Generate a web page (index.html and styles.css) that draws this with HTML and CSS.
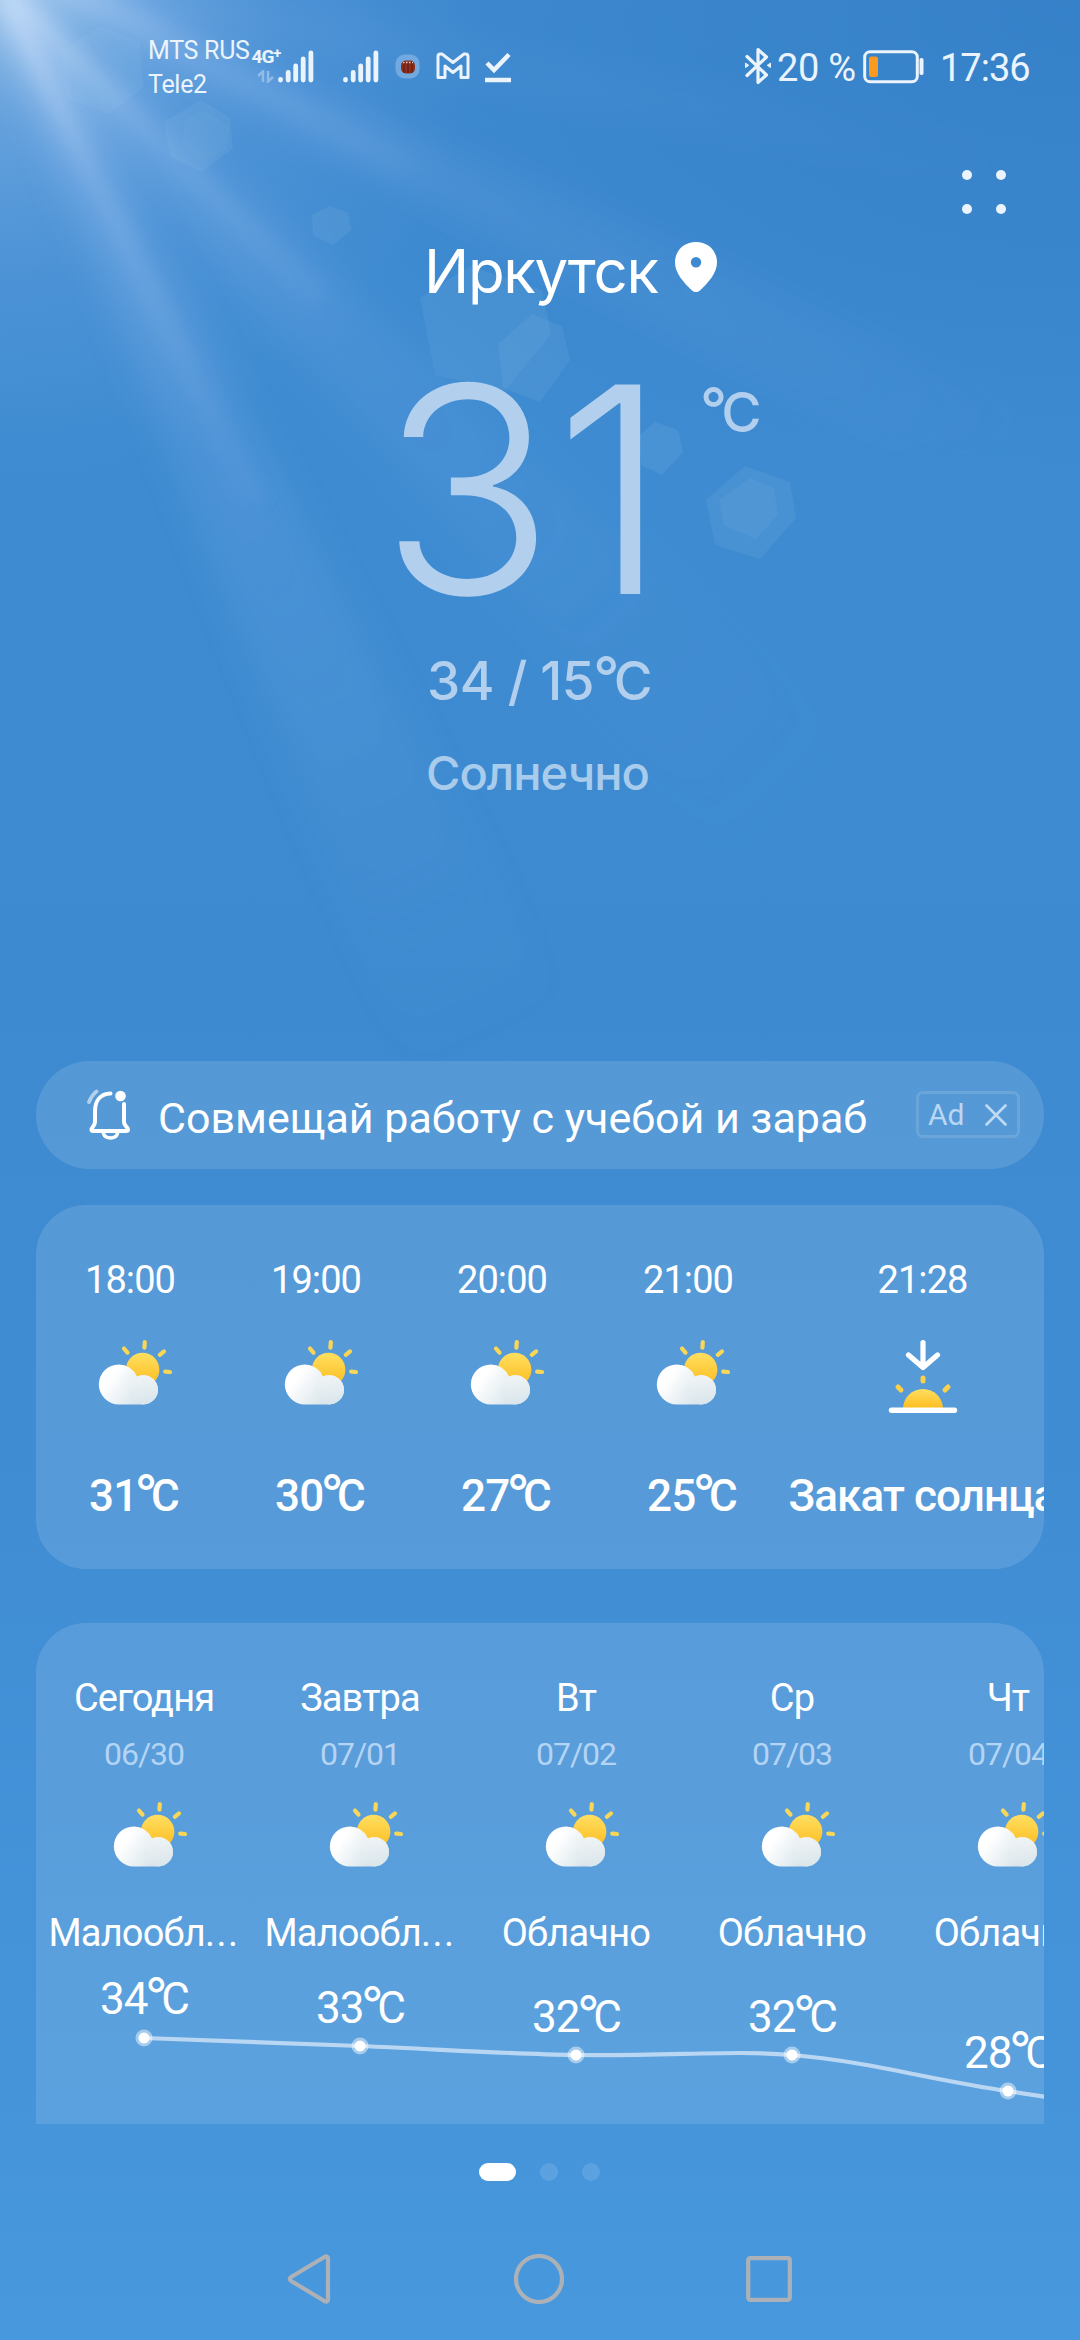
FILE: index.html
```html
<!DOCTYPE html>
<html lang="ru">
<head>
<meta charset="utf-8">
<title>Погода</title>
<link rel="stylesheet" href="styles.css">
</head>
<body>
<svg class="defs" width="0" height="0" aria-hidden="true">
  <defs>
    <linearGradient id="sun" x1="0" y1="0" x2="0" y2="1"><stop offset="0" stop-color="#ffdf60"/><stop offset="1" stop-color="#fdbb1e"/></linearGradient>
    <linearGradient id="cloudA" x1="0" y1="0" x2="1" y2="0.5"><stop offset="0.3" stop-color="#fff"/><stop offset="1" stop-color="#d3e1e8"/></linearGradient>
    <linearGradient id="cloudB" x1="0.3" y1="0" x2="0.5" y2="1"><stop offset="0" stop-color="#f1f4f6"/><stop offset="1" stop-color="#d9e6ec"/></linearGradient>
    <symbol id="partly" viewBox="0 0 84 80">
      <g stroke="#f8d658" stroke-width="4.2" stroke-linecap="round">
        <path d="M55.8 6.2L55.4 11.6M35 12.6L38.5 16.6M70.8 18.8L75 15.4M76.2 35.6L81 36"/>
      </g>
      <circle cx="53.6" cy="33.6" r="16.8" fill="url(#sun)"/>
      <path d="M29.8 28.4a20 20 0 0 0 0 40H54.4a14.6 14.6 0 0 0 0-29.2q-4 0-6.4 1.2A20 20 0 0 0 29.8 28.4z" fill="url(#cloudA)"/>
      <circle cx="54.4" cy="53.8" r="14.6" fill="url(#cloudB)"/>
    </symbol>
    <symbol id="sunset" viewBox="0 0 84 80">
      <g fill="none" stroke="#fff" stroke-width="5.2" stroke-linecap="round" stroke-linejoin="round"><path d="M42 6.5V30M27.5 19L42 31.5L56.5 19"/></g>
      <g stroke="#fbd04a" stroke-width="5" stroke-linecap="round"><path d="M42 42V45M17 51L20 54M67 51L64 54"/></g>
      <path d="M22 73a20 20 0 0 1 40 0z" fill="url(#sun)"/>
      <path d="M10.5 74.3H73.5" stroke="#fff" stroke-width="5.4" stroke-linecap="round"/>
    </symbol>
  </defs>
</svg>

<main class="screen">
  <svg class="sky" viewBox="0 0 1080 1200" aria-hidden="true">
    <defs>
      <radialGradient id="glow" gradientUnits="userSpaceOnUse" cx="0" cy="0" r="480"><stop offset="0" stop-color="#fff" stop-opacity="0.42"/><stop offset="0.25" stop-color="#cfe0ff" stop-opacity="0.26"/><stop offset="0.6" stop-color="#a8c8f8" stop-opacity="0.11"/><stop offset="1" stop-color="#a8c8f8" stop-opacity="0"/></radialGradient>
      <radialGradient id="ray" gradientUnits="userSpaceOnUse" cx="0" cy="0" r="1150"><stop offset="0" stop-color="#dcebff" stop-opacity="0.75"/><stop offset="0.18" stop-color="#a9c8f4" stop-opacity="0.3"/><stop offset="0.45" stop-color="#8fb8ee" stop-opacity="0.16"/><stop offset="1" stop-color="#8fb8ee" stop-opacity="0"/></radialGradient>
      <filter id="soft" filterUnits="userSpaceOnUse" x="-200" y="-200" width="1500" height="1700"><feGaussianBlur stdDeviation="8"/></filter>
      <filter id="softer" filterUnits="userSpaceOnUse" x="-200" y="-200" width="1500" height="1700"><feGaussianBlur stdDeviation="18"/></filter>
    </defs>
    <rect width="1080" height="1200" fill="url(#glow)"/>
    <g fill="url(#ray)">
      <path filter="url(#softer)" d="M-10 -20L10 -20L640 1150L440 1150z"/>
      <path filter="url(#soft)" d="M-4 -10L8 -10L270 500L240 505z" opacity="0.55"/>
      <path filter="url(#softer)" d="M0 0L20 -6L900 780L740 880z" opacity="0.7"/>
      <path filter="url(#soft)" d="M0 -8L20 -6L330 290L310 310z" opacity="0.45"/>
      <path filter="url(#softer)" d="M0 -30L60 -20L1100 440L900 460z" opacity="0.85"/>
      <path filter="url(#soft)" d="M0 -38L70 -30L420 160L400 180z" opacity="0.3"/>
      <path filter="url(#softer)" d="M0 -20L60 -30L1000 130L1000 200z" opacity="0.35"/>
    </g>
    <g fill="#b5d4ee">
      <path d="M100 26L140 42L143 88L108 114L66 98L62 52z" opacity="0.08"/>
      <path d="M201 100L230 118L233 148L202 172L170 157L164 122z" opacity="0.09"/>
      <path d="M204 110L230 126L226 150L203 162L182 146L184 122z" opacity="0.05"/>
      <path d="M330 206L348 213L351 230L333 245L313 235L312 215z" opacity="0.1"/>
      <path d="M470 266L542 290L551 334L505 391L435 375L420 298z" opacity="0.08"/>
      <path d="M532 314L562 326L570 360L540 402L503 388L498 344z" opacity="0.09"/>
      <path d="M655 422L678 430L683 452L662 475L641 465L640 435z" opacity="0.1"/>
      <path d="M745 466L790 482L796 518L760 559L715 545L706 500z" opacity="0.09"/>
      <path d="M750 478L774 488L778 515L756 539L724 526L719 500z" opacity="0.08"/>
    </g>
  </svg>

  <header class="status">
    <div class="carriers"><span>MTS RUS</span><span>Tele2</span></div>
    <div class="net"><b>4G<sup>+</sup></b>
      <svg width="16" height="13" viewBox="0 0 16 13" fill="none" stroke="#a9cbee" stroke-width="2.5" opacity="0.7"><path d="M0 6L5 1.5V12M15 7L10 11.5V1"/></svg>
    </div>
    <svg class="bars" width="36" height="34" viewBox="0 0 36 34" stroke="#ebf4fc" stroke-width="4.8" stroke-linecap="round"><path d="M2.5 30.5v.5M10.2 23.5V31M17.7 17V31M25.2 10V31M32.9 4V31"/></svg>
    <svg class="bars2" width="36" height="34" viewBox="0 0 36 34" stroke="#ebf4fc" stroke-width="4.8" stroke-linecap="round"><path d="M2.5 30.5v.5M10.2 23.5V31M17.7 17V31M25.2 10V31M32.9 4V31"/></svg>
    <svg class="avatar" width="26" height="26" viewBox="0 0 26 26"><rect x="0.5" y="0.5" width="24" height="24" rx="9" fill="#72a9e0"/><rect x="6" y="6.5" width="14" height="13" rx="5" fill="#8e2f1c"/><path d="M9 7v12M13 9v10M17 7v12" stroke="#5e2018" stroke-width="1.2"/><path d="M8 8.5h10" stroke="#e0c8bd" stroke-width="1.4" stroke-dasharray="1.5 1.5"/></svg>
    <svg class="mail" width="34" height="28" viewBox="0 0 34 28" fill="none" stroke="#ebf4fc" stroke-width="3" stroke-linejoin="round"><path d="M2 4.5Q2 2 4.5 2H6L17 10.5L28 2H29.5Q32 2 32 4.5V25.5H25V14L17 20.5L9 14V25.5H2z"/></svg>
    <svg class="check" width="26" height="32" viewBox="0 0 26 32" fill="none" stroke="#ebf4fc" stroke-width="4.5"><path d="M2 12L9 19L24 3.5M0 29H26"/></svg>
    <svg class="bt" width="28" height="38" viewBox="0 0 28 38" fill="none" stroke="#ebf4fc" stroke-width="3.2" stroke-linejoin="round" stroke-linecap="round"><path d="M3 9.5L22.5 28L14 35.5V2.5L22.5 10L3 28.5"/><path d="M1.5 16.5v4L4.5 18.5zM26.5 16.5v4L23.5 18.5z" stroke-width="1" fill="#ebf4fc"/></svg>
    <span class="pct">20 %</span>
    <svg class="batt" width="61" height="34" viewBox="0 0 61 34"><rect x="1.7" y="1.7" width="52.6" height="30" rx="5.5" fill="none" stroke="#ebf4fc" stroke-width="3"/><rect x="6" y="6.5" width="9" height="20.5" rx="2.5" fill="#fb9a1e"/><rect x="56.5" y="8" width="4" height="17" rx="1.7" fill="#ebf4fc"/></svg>
    <time class="clock">17:36</time>
  </header>

  <nav class="menu"><i></i><i></i><i></i><i></i></nav>

  <section class="hero">
    <div class="city"><h1>Иркутск</h1>
      <svg width="42" height="51" viewBox="0 0 42 51"><path fill="#fff" fill-rule="evenodd" d="M21 0C33 0 42 8.5 42 20.5C42 31 33 41 25 48.5Q21 51.5 17 48.5C9 41 0 31 0 20.5C0 8.5 9 0 21 0zM21 15a5.2 5.2 0 1 0 0 10.4a5.2 5.2 0 1 0 0-10.4z"/></svg>
    </div>
    <div class="now"><span class="num">31</span><span class="unit"><i>°</i>C</span></div>
    <p class="range">34 / 15<i>°</i>C</p>
    <p class="cond">Солнечно</p>
  </section>

  <section class="banner">
    <svg width="46" height="52" viewBox="0 0 46 52" fill="none" stroke="#fff" stroke-width="4" stroke-linecap="round"><path d="M24.5 4.6C14 5 9 12 9 22V33C9 37 5.5 38 5.5 40.5Q5.5 42 7.5 42H40Q42 42 42 40.5C42 38 38 37 38 33V15"/><path d="M17.5 44.5Q19 49 24.5 49T31.5 44.5" stroke-width="3.6"/><path d="M3 13Q6 6 10.5 2.5" stroke-opacity="0.55" stroke-width="3.8"/><circle cx="34.5" cy="7" r="5.3" fill="#fff" stroke="none"/></svg>
    <span class="promo">Совмещай работу с учебой и зараб</span>
    <span class="ad">Ad<svg width="22" height="22" viewBox="0 0 22 22" stroke="#bfdbf4" stroke-width="2.6" stroke-linecap="round"><path d="M1.5 1.5L20.5 20.5M20.5 1.5L1.5 20.5"/></svg></span>
  </section>

  <section class="card hours">
    <div class="hour"><time>18:00</time><svg><use href="#partly"/></svg><b class="deg">31<i>°</i>C</b></div>
    <div class="hour"><time>19:00</time><svg><use href="#partly"/></svg><b class="deg">30<i>°</i>C</b></div>
    <div class="hour"><time>20:00</time><svg><use href="#partly"/></svg><b class="deg">27<i>°</i>C</b></div>
    <div class="hour"><time>21:00</time><svg><use href="#partly"/></svg><b class="deg">25<i>°</i>C</b></div>
    <div class="hour dusk"><time>21:28</time><svg><use href="#sunset"/></svg><b>Закат солнца</b></div>
  </section>

  <section class="card days">
    <div class="day"><h2>Сегодня</h2><small>06/30</small><svg><use href="#partly"/></svg><p>Малообл<span class="dots">...</span></p><b class="deg" style="margin-top:17px">34<i>°</i>C</b></div>
    <div class="day"><h2>Завтра</h2><small>07/01</small><svg><use href="#partly"/></svg><p>Малообл<span class="dots">...</span></p><b class="deg" style="margin-top:26px">33<i>°</i>C</b></div>
    <div class="day"><h2>Вт</h2><small>07/02</small><svg><use href="#partly"/></svg><p>Облачно</p><b class="deg" style="margin-top:35px">32<i>°</i>C</b></div>
    <div class="day"><h2>Ср</h2><small>07/03</small><svg><use href="#partly"/></svg><p>Облачно</p><b class="deg" style="margin-top:35px">32<i>°</i>C</b></div>
    <div class="day"><h2>Чт</h2><small>07/04</small><svg><use href="#partly"/></svg><p>Облачно</p><b class="deg" style="margin-top:71px">28<i>°</i>C</b></div>
    <svg class="trend" viewBox="0 0 1008 501" aria-hidden="true">
      <path d="M108 415L324 423C400 426 470 431 540 432C640 433 700 427 756 432C830 438 900 458 972 468L1010 474" fill="none" stroke="#b9d7f3" stroke-width="4.2"/>
      <g fill="#fff" stroke="#fff" stroke-opacity="0.45" stroke-width="6"><circle cx="108" cy="415" r="5.5"/><circle cx="324" cy="423" r="5.5"/><circle cx="540" cy="432" r="5.5"/><circle cx="756" cy="432" r="5.5"/><circle cx="972" cy="468" r="5.5"/></g>
    </svg>
  </section>

  <div class="pager"><i class="on"></i><i></i><i></i></div>

  <footer class="keys">
    <svg width="44" height="50" viewBox="0 0 44 50"><path d="M4.5 22.8L37 3.2Q41 1 41 4.5V45.5Q41 49 37 46.8L4.5 27.2Q1 25 4.5 22.8z"/></svg>
    <svg width="50" height="50" viewBox="0 0 50 50"><circle cx="25" cy="25" r="23"/></svg>
    <svg width="46" height="46" viewBox="0 0 46 46"><rect x="2.2" y="2.2" width="41.6" height="41.6" rx="2"/></svg>
  </footer>
</main>
</body>
</html>
```
FILE: styles.css
```css
* { box-sizing: border-box; margin: 0; padding: 0; }
body { width: 1080px; height: 2340px; overflow: hidden; font-family: Roboto, "Liberation Sans", sans-serif; color: #fff; }
.defs { position: absolute; }
i { font-style: normal; }
svg { flex: none; display: block; }

.screen {
  position: relative;
  width: 1080px; height: 2340px;
  display: flex; flex-direction: column;
  overflow: hidden;
  background:
    radial-gradient(900px 500px at 1080px 0, rgba(36, 112, 186, 0.38), rgba(36, 112, 186, 0) 100%),
    linear-gradient(#408bd1 0, #3e8bd1 500px, #3d8ad0 1000px, #408dd4 1500px, #4594da 2050px, #4898de 2340px);
}
.sky { position: absolute; left: 0; top: 0; width: 1080px; height: 1200px; }
.screen > :not(.sky) { position: relative; }

/* status bar */
.status { height: 120px; flex: none; display: flex; align-items: flex-start; color: #ebf4fc; white-space: nowrap; }
.carriers { width: 105px; margin-left: 148px; padding-top: 34px; display: flex; flex-direction: column; font-size: 25px; line-height: 34px; letter-spacing: -0.3px; }
.net { width: 26px; margin-top: 47px; display: flex; flex-direction: column; gap: 3px; align-items: center; }
.net b { font-size: 19px; line-height: 20px; letter-spacing: -1px; }
.net sup { font-size: 15px; line-height: 0; vertical-align: 5px; }
.bars { margin: 49px 0 0 -1px; }
.bars2 { margin: 49px 0 0 29px; }
.avatar { margin: 54px 0 0 16px; }
.mail { margin: 52px 0 0 15px; }
.check { margin: 51px 0 0 15px; }
.bt { margin: 47px 0 0 233px; }
.pct { margin: 44px 0 0 5px; width: 84px; font-size: 38px; line-height: 48px; letter-spacing: -0.3px; }
.batt { margin: 50px 0 0 2px; }
.clock { margin: 44px 0 0 16px; font-size: 38px; line-height: 48px; letter-spacing: -1px; }

.menu { width: 44px; height: 44px; flex: none; margin: 50px 0 0 962px; display: grid; grid-template-columns: 10px 10px; gap: 24px; }
.menu i { width: 10px; height: 10px; border-radius: 50%; background: #ebf4fc; }

/* current conditions */
.hero { height: 825px; flex: none; margin-top: 21px; font-family: Inter, Roboto, sans-serif; display: flex; flex-direction: column; }
.city { display: flex; gap: 13px; padding-left: 424px; height: 72px; }
.city h1 { width: 238px; font-size: 60px; line-height: 72px; font-weight: 400; letter-spacing: -1.3px; }
.city svg { margin-top: 7px; }
.now { display: flex; height: 230px; margin-top: 67px; padding-left: 380px; color: #b2d0ee; }
.num { width: 320px; font-size: 288px; line-height: 230px; font-weight: 300; }
.unit { margin-top: 5px; font-size: 55px; line-height: 66px; font-weight: 500; }
.range { margin: 45px 0 0 427px; font-size: 53px; line-height: 64px; font-weight: 500; color: #b2d0ee; white-space: nowrap; letter-spacing: -0.5px; }
.cond { margin: 32px 0 0 426px; font-size: 47px; line-height: 56px; font-weight: 500; letter-spacing: -1px; color: #a9cbec; }
.unit i, .range i, .deg i { font-family: Inter, sans-serif; font-size: 1.08em; line-height: 0; vertical-align: 2px; }
.unit i { margin-right: -6px; }
.range i { margin: 0 -5px 0 -1px; }

/* promo strip */
.banner { height: 108px; flex: none; margin: 1px 36px 0; border-radius: 54px; background: rgba(255, 255, 255, 0.12); display: flex; align-items: flex-start; white-space: nowrap; overflow: hidden; }
.banner > svg { margin: 28px 0 0 50px; }
.promo { width: 736px; margin: 29px 0 0 26px; font-size: 43px; line-height: 56px; }
.ad { width: 104px; height: 47px; margin-top: 30px; margin-left: 22px; border: 3px solid rgba(255, 255, 255, 0.13); border-radius: 7px; display: flex; align-items: center; gap: 20px; padding-left: 9px; font-size: 30px; color: #b9d7f3; }

/* forecast cards */
.card { flex: none; margin: 0 36px; display: flex; background: rgba(255, 255, 255, 0.12); overflow: hidden; white-space: nowrap; }
.hours { height: 364px; margin-top: 36px; border-radius: 50px; padding-left: 1px; }
.hour { width: 186px; flex: none; display: flex; flex-direction: column; align-items: center; }
.hour time { margin-top: 52px; font-size: 38px; line-height: 46px; letter-spacing: -0.9px; }
.hour svg { width: 84px; height: 80px; margin: 33px 0 0 1px; }
.hour b { margin-top: 54px; font-size: 44px; line-height: 52px; font-weight: 500; letter-spacing: -0.9px; }
.hour .deg { margin-left: 8px; }
.dusk { width: 283px; }
.deg i { margin-left: -2px; margin-right: -5px; }

.days { height: 501px; margin-top: 54px; border-radius: 50px 50px 0 0; }
.day { width: 216px; flex: none; display: flex; flex-direction: column; align-items: center; }
.day h2 { margin-top: 52px; font-size: 38px; line-height: 46px; font-weight: 400; letter-spacing: -0.9px; }
.day small { margin-top: 14px; font-size: 32px; line-height: 38px; letter-spacing: -1px; color: #b4d4f3; }
.day svg { width: 84px; height: 80px; margin: 25px 0 0 3px; }
.day p { margin-top: 32px; font-size: 38px; line-height: 46px; letter-spacing: -0.8px; }
.dots { letter-spacing: 1.5px; }
.day b { margin-left: 1px; font-size: 44px; line-height: 52px; font-weight: 400; letter-spacing: -0.9px; }
.trend { position: absolute; left: 0; top: 0; width: 1008px; height: 501px; }

.pager { flex: none; height: 18px; margin-top: 39px; padding-left: 479px; display: flex; gap: 24px; }
.pager i { width: 18px; border-radius: 9px; background: rgba(255, 255, 255, 0.12); }
.pager .on { width: 37px; background: #fff; }

.keys { flex: none; height: 50px; margin-top: 73px; padding: 0 288px 0 287px; display: flex; justify-content: space-between; align-items: center; }
.keys svg { fill: none; stroke: #abb1b6; stroke-width: 4.2; }
```
